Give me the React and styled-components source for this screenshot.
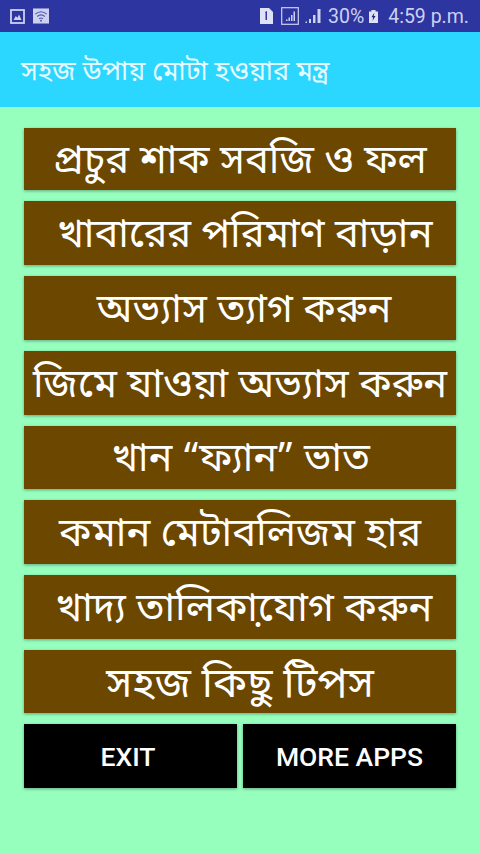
import React from "react";
import styled, { createGlobalStyle } from "styled-components";

const GlobalStyle = createGlobalStyle`
  html, body {
    margin: 0;
    padding: 0;
    background: #96ffbe;
  }
`;

const Page = styled.div`
  width: 480px;
  height: 854px;
  overflow: hidden;
  display: flex;
  flex-direction: column;
  background: #96ffbe;
  font-family: "Noto Sans Bengali", "Lohit Bengali", "Noto Sans", Roboto, sans-serif;
`;

const StatusBar = styled.div`
  height: 32px;
  flex-shrink: 0;
  display: flex;
  align-items: center;
  justify-content: space-between;
  padding: 0 11px 0 10px;
  background: #2d35a0;
  color: #cdd1f0;
`;

const StatusGroup = styled.div`
  display: flex;
  align-items: center;
`;

const StatusItem = styled.span`
  display: flex;
  align-items: center;
  margin-left: ${(p) => p.$left || 0}px;
  font-family: Roboto, sans-serif;
  font-size: 19.5px;
`;

const AppBar = styled.header`
  height: 75px;
  flex-shrink: 0;
  display: flex;
  align-items: center;
  padding: 6px 0 0 21px;
  box-sizing: border-box;
  background: #2bd6ff;
  color: #e6fbff;
  font-size: 27px;
`;

const Menu = styled.main`
  display: flex;
  flex-direction: column;
  gap: 11px;
  padding: 21px 24px 0;
`;

const MenuButton = styled.button`
  height: ${(p) => p.$height || 64}px;
  padding: 8px 0 0 ${(p) => p.$indent || 0}px;
  border: none;
  background: #6b4700;
  color: #fff;
  font-family: inherit;
  font-size: ${(p) => p.$size || 40}px;
  line-height: 1;
  white-space: nowrap;
  box-shadow: 0 1px 3px rgba(0, 0, 0, 0.35);
`;

const BottomRow = styled.div`
  display: grid;
  grid-template-columns: 213px 213px;
  justify-content: space-between;
`;

const BlackButton = styled.button`
  height: 64px;
  padding: 0 ${(p) => p.$right || 0}px 0 0;
  border: none;
  background: #000;
  color: #fff;
  font-family: Roboto, sans-serif;
  font-size: 26.5px;
  font-weight: 500;
  box-shadow: 0 1px 3px rgba(0, 0, 0, 0.35);
`;

const items = [
  { label: "প্রচুর শাক সবজি ও ফল", height: 62 },
  { label: "খাবারের পরিমাণ বাড়ান", indent: 10 },
  { label: "অভ্যাস ত্যাগ করুন", indent: 8 },
  { label: "জিমে যাওয়া অভ্যাস করুন" },
  { label: "খান “ফ্যান” ভাত", indent: 2, height: 63, size: 39.5 },
  { label: "কমান মেটাবলিজম হার" },
  { label: "খাদ্য তালিকা়যোগ করুন", indent: 8 },
  { label: "সহজ কিছু টিপস", height: 63, size: 42 },
];

const PictureIcon = () => (
  <svg width="15" height="15" viewBox="0 0 15 15">
    <rect x="1" y="1" width="13" height="13" fill="none" stroke="#cdd1f0" strokeWidth="1.8" />
    <path d="M3.5 11 L5.8 7 L7.5 8.8 L9 5.5 L11.5 11 Z" fill="#cdd1f0" />
  </svg>
);

const WifiIcon = () => (
  <svg width="16" height="16" viewBox="0 0 17 16">
    <rect width="17" height="16" fill="#cdd1f0" />
    <path d="M2.5 6 Q8.5 1 14.5 6 M4.5 8.5 Q8.5 5 12.5 8.5 M6.5 11 Q8.5 9.3 10.5 11" fill="none" stroke="#4a51ad" strokeWidth="1.2" />
    <circle cx="8.5" cy="13" r="1" fill="#4a51ad" />
  </svg>
);

const SimIcon = () => (
  <svg width="13" height="16" viewBox="0 0 13 16">
    <path d="M0 0 H9 L13 4 V16 H0 Z" fill="#dfe2f6" />
    <path d="M5 4 L7 3 V12 H5.5 V5 Z" fill="#2d35a0" />
  </svg>
);

const SignalBoxIcon = () => (
  <svg width="18" height="18" viewBox="0 0 18 18">
    <rect x="0.7" y="0.7" width="16.6" height="16.6" fill="none" stroke="#cdd1f0" strokeWidth="1.2" />
    <path d="M5 14 h1.5 v-1.5 h-1.5 Z M7.5 14 h1.5 v-3.5 h-1.5 Z M10 14 h1.5 v-6 h-1.5 Z M12.5 14 h1.5 V4.5 h-1.5 Z" fill="#cdd1f0" />
  </svg>
);

const BarsIcon = () => (
  <svg width="16" height="16" viewBox="0 0 16 16">
    <path d="M0.5 15 h1.5 v-1.5 h-1.5 Z M4 15 h2 v-4 h-2 Z M8 15 h2.5 v-8 h-2.5 Z M12.5 15 h3 V1 h-3 Z" fill="#cdd1f0" />
  </svg>
);

const BatteryIcon = () => (
  <svg width="9" height="15" viewBox="0 0 11 16">
    <path d="M3 0 H8 V2 H11 V16 H0 V2 H3 Z" fill="#dfe2f6" />
    <path d="M6.5 3.5 L3 9 H5.2 L4.2 13.5 L8 7.5 H5.8 Z" fill="#1d2270" />
  </svg>
);

const App = () => {
  return (
    <Page>
      <GlobalStyle />
      <StatusBar>
        <StatusGroup>
          <StatusItem><PictureIcon /></StatusItem>
          <StatusItem $left={8}><WifiIcon /></StatusItem>
        </StatusGroup>
        <StatusGroup>
          <StatusItem><SimIcon /></StatusItem>
          <StatusItem $left={8}><SignalBoxIcon /></StatusItem>
          <StatusItem $left={6}><BarsIcon /></StatusItem>
          <StatusItem $left={7}>30%</StatusItem>
          <StatusItem $left={5}><BatteryIcon /></StatusItem>
          <StatusItem $left={10}>4:59 p.m.</StatusItem>
        </StatusGroup>
      </StatusBar>
      <AppBar>সহজ উপায় মোটা হওয়ার মন্ত্র</AppBar>
      <Menu>
        {items.map((item) => (
          <MenuButton key={item.label} $height={item.height} $indent={item.indent} $size={item.size}>
            {item.label}
          </MenuButton>
        ))}
        <BottomRow>
          <BlackButton $right={5}>EXIT</BlackButton>
          <BlackButton>MORE APPS</BlackButton>
        </BottomRow>
      </Menu>
    </Page>
  );
};

export default App;
